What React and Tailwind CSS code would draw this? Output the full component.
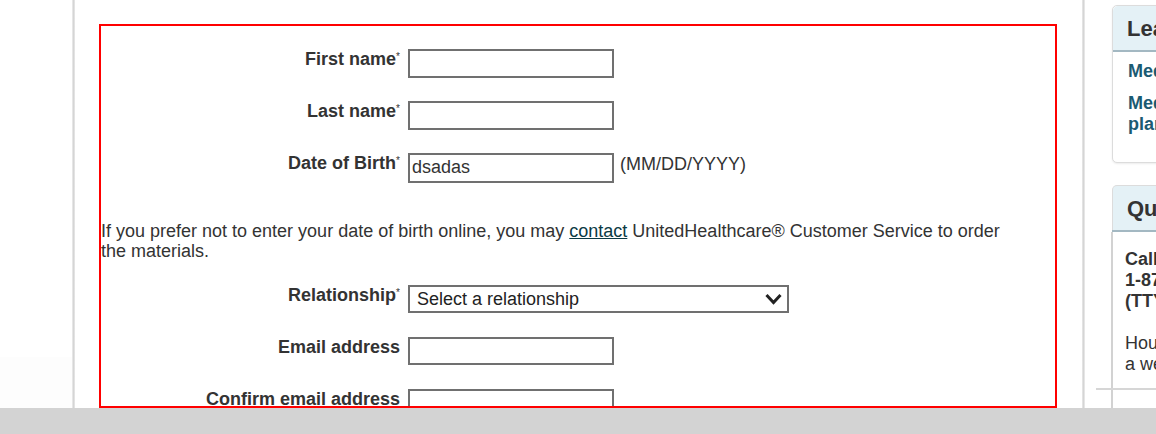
import React from "react";

function Label({ children, req = true, className = "" }) {
  return (
    <div className={`w-[299px] shrink-0 text-right font-bold text-[18px] leading-[20px] text-[#333] ${className}`}>
      {children}
      {req && <sup className="text-[10px] font-normal">*</sup>}
    </div>
  );
}

function Field({ h = "h-[29px]", value = "" }) {
  return (
    <div className={`ml-[8px] w-[206px] ${h} shrink-0 border-2 border-[#707070] bg-white pl-[2px] text-[18px] leading-[25px] text-[#333]`}>
      {value}
    </div>
  );
}

export default function App() {
  return (
    <div className="w-[1156px] h-[434px] overflow-hidden flex flex-col bg-white font-['Liberation_Sans',Arial,sans-serif] text-[#333]">
      <div className="flex h-[408px] overflow-hidden">
        {/* left gutter */}
        <div className="w-[72px] shrink-0 flex flex-col">
          <div className="h-[357px] bg-white" />
          <div className="flex-1 bg-[#fdfdfd]" />
        </div>
        <div className="w-[3px] shrink-0 bg-linear-to-r from-[#efefef] via-[#d5d5d5] to-[#eaeaea]" />

        {/* main panel */}
        <main className="w-[1007px] shrink-0 bg-white pl-[24px] pt-[24px] overflow-hidden">
          <div className="w-[958px] h-[384px] border-2 border-[#ff0000] overflow-hidden pt-[23px]">
            <div className="flex items-start h-[52px]">
              <Label>First name</Label>
              <Field />
            </div>
            <div className="flex items-start h-[52px]">
              <Label>Last name</Label>
              <Field />
            </div>
            <div className="flex items-start h-[52px]">
              <Label>Date of Birth</Label>
              <Field h="h-[30px]" value="dsadas" />
              <div className="ml-[6px] pt-[1px] text-[18px] leading-[20px] text-[#333]">(MM/DD/YYYY)</div>
            </div>
            <div className="h-[80px] pt-[16px]">
              <p className="max-w-[920px] text-[18px] leading-[20px] text-[#333]">
                If you prefer not to enter your date of birth online, you may{" "}
                <span className="underline text-[#0b3a44]">contact</span> UnitedHealthcare® Customer Service to order the materials.
              </p>
            </div>
            <div className="flex items-start h-[52px]">
              <Label>Relationship</Label>
              <div className="ml-[8px] w-[381px] h-[28px] shrink-0 border-2 border-[#707070] bg-white pl-[7px] pr-[5px] flex items-center justify-between text-[18px] text-[#222]">
                <span>Select a relationship</span>
                <svg width="17" height="12" viewBox="0 0 17 12" fill="none">
                  <polyline points="1.5,2 8.5,9.5 15.5,2" stroke="#222" strokeWidth="3" strokeLinejoin="miter" />
                </svg>
              </div>
            </div>
            <div className="flex items-start h-[52px]">
              <Label req={false}>Email address</Label>
              <Field h="h-[28px]" />
            </div>
            <div className="flex items-start h-[52px]">
              <Label req={false}>Confirm email address</Label>
              <Field h="h-[28px]" />
            </div>
          </div>
        </main>

        <div className="w-[3px] shrink-0 bg-linear-to-r from-[#eaeaea] via-[#d5d5d5] to-[#efefef]" />

        {/* sidebar */}
        <aside className="flex-1 overflow-hidden bg-white">
          <div className="ml-[27px] w-[270px] pt-[5px]">
            <div className="rounded-[5px] border border-[#dcdcdc] shadow-[0_1px_2px_rgba(0,0,0,0.08)] bg-white">
              <div className="h-[46px] rounded-t-[5px] bg-[#e4f1f6] border-b-2 border-[#a3b8c2] pl-[14px] pt-[10px] text-[22px] leading-[25px] font-bold text-[#333] whitespace-nowrap">
                Learn more
              </div>
              <div className="pl-[15px] pt-[9px] pb-[27px] text-[18px] leading-[21px] font-bold text-[#1b5a72] whitespace-nowrap">
                <div>Medicare basics</div>
                <div className="mt-[11px]">Medicare supplement</div>
                <div>plans</div>
              </div>
            </div>

            <div className="mt-[22px]">
              <div className="h-[45px] rounded-t-[5px] border border-b-0 border-[#dcdcdc] bg-[#e4f1f6] pl-[14px] pt-[10px] text-[22px] leading-[25px] font-bold text-[#333] whitespace-nowrap">
                Questions?
              </div>
              <div className="h-[2px] bg-[#a3b8c2]" />
              <div className="-ml-[1px] border-l-2 border-[#d2d2d2] pt-[17px] text-[18px] leading-[21px] text-[#333] whitespace-nowrap">
                <div className="pl-[12px] font-bold">
                  <div>Call UnitedHealthcare</div>
                  <div>1-877-699-5710</div>
                  <div>(TTY 711)</div>
                </div>
                <div className="pl-[12px] mt-[21px]">
                  <div>Hours: 8 a.m. to 8 p.m., 7 days</div>
                  <div>a week</div>
                </div>
                <div className="mt-[13px] -ml-[17px] h-[2px] bg-[#d6d6d6]" />
                <div className="pl-[12px] pt-[15px] font-bold">Need help?</div>
              </div>
            </div>
          </div>
        </aside>
      </div>
      <div className="h-[26px] shrink-0 bg-[#d3d3d3]" />
    </div>
  );
}
